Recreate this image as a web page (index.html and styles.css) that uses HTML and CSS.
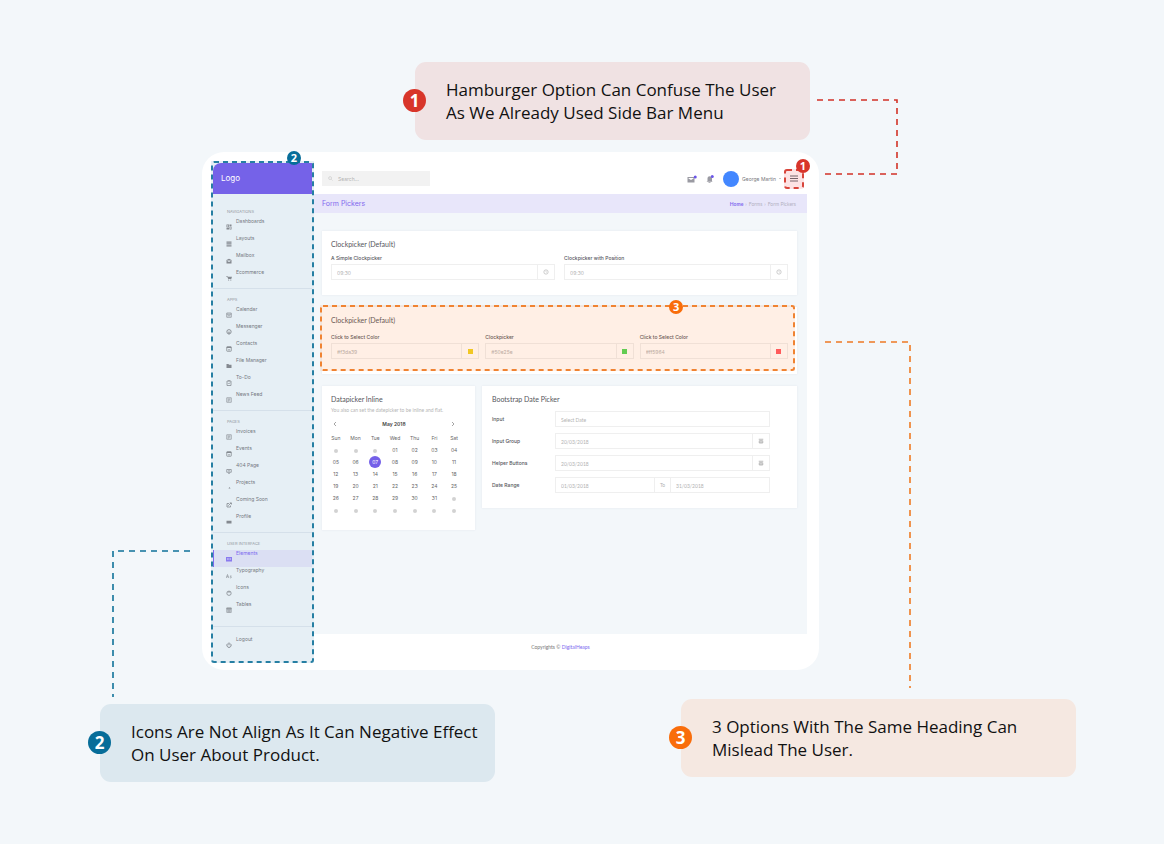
FILE: index.html
```html
<!DOCTYPE html>
<html lang="en">
<head>
<meta charset="utf-8">
<meta name="viewport" content="width=device-width, initial-scale=1">
<title>Form Pickers review</title>
<link rel="stylesheet" href="styles.css">
</head>
<body>
<svg class="sprite" aria-hidden="true">
  <symbol id="i-grid" viewBox="0 0 12 12"><path fill="currentColor" fill-rule="evenodd" d="M1 1h5v6H1zM7 1h4v3H7zM1 8h5v3H1zM7 5h4v6H7zM2.500 2.500v3h2v-3zM8.500 6.500v3h1.500v-3z"/></symbol>
  <symbol id="i-rows" viewBox="0 0 12 12"><path fill="currentColor" d="M1 1h10v2.500H1zM1 4.700h10v2.500H1zM1 8.500h10V11H1z"/></symbol>
  <symbol id="i-mail" viewBox="0 0 12 12"><path fill="currentColor" fill-rule="evenodd" d="M1 4l5-2.500L11 4v7H1zM2.500 5.200v.8L6 8l3.500-2v-.8z"/></symbol>
  <symbol id="i-cart" viewBox="0 0 12 12"><path fill="currentColor" d="M0 2h3l.6 1.500H12L10.500 8H4.500L2.200 3.200H0z"/><circle cx="5.200" cy="10" r="1.200" fill="currentColor"/><circle cx="9.600" cy="10" r="1.200" fill="currentColor"/></symbol>
  <symbol id="i-cal" viewBox="0 0 12 12"><path fill="none" stroke="currentColor" stroke-width="1.400" d="M1.500 2h9v8.500h-9zM1.500 4.500h9M3.500 7.500h5"/></symbol>
  <symbol id="i-chat" viewBox="0 0 12 12"><circle cx="6" cy="5.500" r="4.300" fill="none" stroke="currentColor" stroke-width="1.800"/><path fill="currentColor" d="M3 5.500h6L6 8zM4.500 9h3L6 12z"/></symbol>
  <symbol id="i-contact" viewBox="0 0 12 12"><rect x="1.500" y="1.500" width="9" height="9" rx="1" fill="none" stroke="currentColor" stroke-width="1.600"/><path fill="currentColor" d="M1.500 1.500h9v2.500h-9zM4 7h4v1.500H4z"/></symbol>
  <symbol id="i-folder" viewBox="0 0 12 12"><path fill="currentColor" d="M1 2h4l1 1.500h5V10H1z"/></symbol>
  <symbol id="i-todo" viewBox="0 0 12 12"><path fill="none" stroke="currentColor" stroke-width="1.500" d="M2 2h8v9H2zM4 1.500h4M4 6.500l1.500 1.500L8.200 5"/></symbol>
  <symbol id="i-feed" viewBox="0 0 12 12"><path fill="none" stroke="currentColor" stroke-width="1.300" d="M1.500 1.500h9v9h-9zM3.500 4h5M3.500 6h5M3.500 8h3"/></symbol>
  <symbol id="i-screen" viewBox="0 0 12 12"><path fill="none" stroke="currentColor" stroke-width="1.500" d="M1.500 3h9v5.500h-9zM4 10.500h4M4 5.700h4"/></symbol>
  <symbol id="i-spark" viewBox="0 0 12 12"><path fill="currentColor" d="M7 4l2 3H5z"/></symbol>
  <symbol id="i-send" viewBox="0 0 12 12"><path fill="none" stroke="currentColor" stroke-width="1.600" d="M6 3H2v7h7V7M4.500 7.500L10 2M7.500 1.800H11V5"/></symbol>
  <symbol id="i-card" viewBox="0 0 12 12"><path fill="currentColor" d="M1 3.500h10v5.500H1z"/></symbol>
  <symbol id="i-elements" viewBox="0 0 12 12"><path fill="currentColor" fill-rule="evenodd" d="M0 2h12v9H0zM2 4.500v1h3.500v-1zM2 7v1h3.500V7zM7 4.500v1h3v-1zM7 7v1h3V7z"/></symbol>
  <symbol id="i-type" viewBox="0 0 12 12"><path fill="none" stroke="currentColor" stroke-width="1.200" d="M.5 10L3 3l2.500 7M1.500 7.500h3M11 6c-3-1.500-3 1-1.800 1.300 2.300.5 2 3.400-1.400 2.200"/></symbol>
  <symbol id="i-badge" viewBox="0 0 12 12"><circle cx="6" cy="6.500" r="4.300" fill="none" stroke="currentColor" stroke-width="1.600"/><path stroke="currentColor" stroke-width="1.600" d="M3.500 4h5"/></symbol>
  <symbol id="i-table" viewBox="0 0 12 12"><path fill="none" stroke="currentColor" stroke-width="1.100" d="M1.500 2h9v9h-9zM1.500 5h9M1.500 8h9M4.500 5v6M7.500 5v6"/><path fill="currentColor" d="M1 1.500h10v2H1z"/></symbol>
  <symbol id="i-power" viewBox="0 0 12 12"><path fill="none" stroke="currentColor" stroke-width="1.900" d="M3.800 3a4.200 4.200 0 1 0 4.400 0M6 1v5.500"/></symbol>
  <symbol id="i-clock" viewBox="0 0 12 12"><circle cx="6" cy="6" r="4.300" fill="none" stroke="currentColor" stroke-width="1.400"/><path fill="none" stroke="currentColor" d="M6 3.500V6l1.500 1"/></symbol>
  <symbol id="i-date" viewBox="0 0 12 12"><path fill="none" stroke="currentColor" stroke-width="1.200" d="M1.500 2.500h9M2.500 5.500h7v4.500h-7zM6 5.500V10"/></symbol>
</svg>

<main class="board">
  <section class="top-row">
    <aside class="callout red"><span class="badge">1</span><p>Hamburger Option Can Confuse The User<br>As We Already Used Side Bar Menu</p></aside>
  </section>

  <section class="frame">
    <svg class="connector c1" viewBox="0 0 84 78" aria-hidden="true"><path d="M1 2H81V76H6"/></svg>
    <svg class="connector c2" viewBox="0 0 80 150" aria-hidden="true"><path d="M79 2H2V148"/></svg>
    <svg class="connector c3" viewBox="0 0 88 350" aria-hidden="true"><path d="M1 2H86V348"/></svg>

    <nav class="sidebar">
      <svg class="outline blue" aria-hidden="true"><rect/></svg>
      <span class="badge small blue">2</span>
      <div class="brand">Logo</div>
      <div class="group first">
        <h3>NAVIGATIONS</h3>
        <a href="#"><svg><use href="#i-grid"/></svg>Dashboards</a>
        <a href="#"><svg><use href="#i-rows"/></svg>Layouts</a>
        <a href="#"><svg><use href="#i-mail"/></svg>Mailbox</a>
        <a href="#"><svg><use href="#i-cart"/></svg>Ecommerce</a>
      </div>
      <div class="group">
        <h3>APPS</h3>
        <a href="#"><svg><use href="#i-cal"/></svg>Calendar</a>
        <a href="#"><svg><use href="#i-chat"/></svg>Messenger</a>
        <a href="#"><svg><use href="#i-contact"/></svg>Contacts</a>
        <a href="#"><svg><use href="#i-folder"/></svg>File Manager</a>
        <a href="#"><svg><use href="#i-todo"/></svg>To-Do</a>
        <a href="#"><svg><use href="#i-feed"/></svg>News Feed</a>
      </div>
      <div class="group">
        <h3>PAGES</h3>
        <a href="#"><svg><use href="#i-feed"/></svg>Invoices</a>
        <a href="#"><svg><use href="#i-contact"/></svg>Events</a>
        <a href="#"><svg><use href="#i-screen"/></svg>404 Page</a>
        <a href="#"><svg><use href="#i-spark"/></svg>Projects</a>
        <a href="#"><svg><use href="#i-send"/></svg>Coming Soon</a>
        <a href="#"><svg><use href="#i-card"/></svg>Profile</a>
      </div>
      <div class="group last">
        <h3>USER INTERFACE</h3>
        <a href="#" class="active"><svg><use href="#i-elements"/></svg>Elements</a>
        <a href="#"><svg><use href="#i-type"/></svg>Typography</a>
        <a href="#"><svg><use href="#i-badge"/></svg>Icons</a>
        <a href="#"><svg><use href="#i-table"/></svg>Tables</a>
      </div>
      <div class="group exit">
        <a href="#"><svg><use href="#i-power"/></svg>Logout</a>
      </div>
    </nav>

    <div class="main">
      <header class="topbar">
        <label class="search">
          <svg viewBox="0 0 12 12"><circle cx="5" cy="5" r="3.500"/><path d="M8 8l3 3"/></svg>
          <input type="search" placeholder="Search..." aria-label="Search">
        </label>
        <div class="account">
          <button class="notice" aria-label="Messages"><svg viewBox="0 0 20 16"><path fill="#9a9aa2" fill-rule="evenodd" d="M1 4h14v11H1zM3 6v1l5 3 5-3V6z"/><circle cx="16.500" cy="4" r="3" fill="#6a55e8"/></svg></button>
          <button class="notice" aria-label="Alerts"><svg viewBox="0 0 20 16"><path fill="#9a9aa2" d="M5 12V7c0-3 2-4.500 4-4.500S14 5 14 7v5l1 1.500H3zM7 14h4v1.500H7z"/><circle cx="14.500" cy="3" r="3" fill="#6a55e8"/></svg></button>
          <span class="avatar"></span>
          <button class="user">George Martin<i></i></button>
          <button class="menu" aria-label="Menu">
            <svg class="outline red" aria-hidden="true"><rect/></svg>
            <svg class="bars" viewBox="0 0 8 7"><path d="M0 1h8M0 3.500h8M0 6h8"/></svg>
            <span class="badge small red">1</span>
          </button>
        </div>
      </header>
      <div class="titlebar">
        <h1>Form Pickers</h1>
        <div class="crumbs"><a href="#">Home</a><span>›</span><span>Forms</span><span>›</span><span>Form Pickers</span></div>
      </div>

      <div class="content">
        <section class="card">
          <h2>Clockpicker (Default)</h2>
          <div class="fields two">
            <label>A Simple Clockpicker<span class="group-input"><input value="09:30"><span class="addon pale"><svg><use href="#i-clock"/></svg></span></span></label>
            <label>Clockpicker with Position<span class="group-input"><input value="09:30"><span class="addon pale"><svg><use href="#i-clock"/></svg></span></span></label>
          </div>
        </section>

        <section class="card marked">
          <h2>Clockpicker (Default)</h2>
          <div class="fields three">
            <label>Click to Select Color<span class="group-input"><input value="#f3da39"><span class="addon"><i class="swatch yellow"></i></span></span></label>
            <label>Clockpicker<span class="group-input"><input value="#50e25e"><span class="addon"><i class="swatch green"></i></span></span></label>
            <label>Click to Select Color<span class="group-input"><input value="#ff5964"><span class="addon"><i class="swatch coral"></i></span></span></label>
          </div>
          <div class="highlight">
            <svg class="outline orange" aria-hidden="true"><rect/></svg>
            <span class="badge small orange">3</span>
          </div>
        </section>

        <div class="pair">
          <section class="card calendar">
            <h2>Datapicker Inline</h2>
            <p>You also can set the datepicker to be inline and flat.</p>
            <div class="month">
              <button aria-label="Previous month"><svg viewBox="0 0 6 8"><path d="M4.500 1L1.500 4l3 3"/></svg></button>
              <strong>May 2018</strong>
              <button aria-label="Next month"><svg viewBox="0 0 6 8"><path d="M1.500 1l3 3-3 3"/></svg></button>
            </div>
            <table>
              <thead><tr><th>Sun</th><th>Mon</th><th>Tue</th><th>Wed</th><th>Thu</th><th>Fri</th><th>Sat</th></tr></thead>
              <tbody>
                <tr><td><i></i></td><td><i></i></td><td><i></i></td><td>01</td><td>02</td><td>03</td><td>04</td></tr>
                <tr><td>05</td><td>06</td><td><b>07</b></td><td>08</td><td>09</td><td>10</td><td>11</td></tr>
                <tr><td>12</td><td>13</td><td>14</td><td>15</td><td>16</td><td>17</td><td>18</td></tr>
                <tr><td>19</td><td>20</td><td>21</td><td>22</td><td>23</td><td>24</td><td>25</td></tr>
                <tr><td>26</td><td>27</td><td>28</td><td>29</td><td>30</td><td>31</td><td><i></i></td></tr>
                <tr><td><i></i></td><td><i></i></td><td><i></i></td><td><i></i></td><td><i></i></td><td><i></i></td><td><i></i></td></tr>
              </tbody>
            </table>
          </section>

          <section class="card dates">
            <h2>Bootstrap Date Picker</h2>
            <div class="line"><label for="d1">Input</label><span class="group-input"><input id="d1" placeholder="Select Date"></span></div>
            <div class="line"><label for="d2">Input Group</label><span class="group-input"><input id="d2" value="20/03/2018"><span class="addon"><svg><use href="#i-date"/></svg></span></span></div>
            <div class="line"><label for="d3">Helper Buttons</label><span class="group-input"><input id="d3" value="20/03/2018"><span class="addon"><svg><use href="#i-date"/></svg></span></span></div>
            <div class="line"><label for="d4">Date Range</label><span class="group-input"><input id="d4" value="01/03/2018"><span class="addon to">To</span><input aria-label="Range end" value="31/03/2018"></span></div>
          </section>
        </div>
      </div>

      <footer>Copyrights © <a href="#">DigitalHeaps</a></footer>
    </div>
  </section>

  <section class="bottom-row">
    <aside class="callout blue"><span class="badge">2</span><p>Icons Are Not Align As It Can Negative Effect<br>On User About Product.</p></aside>
    <aside class="callout orange"><span class="badge">3</span><p>3 Options With The Same Heading Can<br>Mislead The User.</p></aside>
  </section>
</main>
</body>
</html>
```

FILE: styles.css
```css
* { box-sizing: border-box; }
body {
  margin: 0;
  min-height: 100vh;
  background: #f3f7fa;
  color: #55555c;
  font: 5px/6px Inter, "Liberation Sans", sans-serif;
}
h1, h2, h3, p { margin: 0; font-weight: 400; }
a { color: inherit; text-decoration: none; }
button { border: 0; padding: 0; background: none; font: inherit; color: inherit; }
input { border: 0; padding: 0; background: none; font: inherit; color: inherit; min-width: 0; outline: 0; }
.sprite { display: none; }

.board { padding-top: 62px; }
.top-row { display: flex; justify-content: flex-end; padding-right: 354px; }
.bottom-row {
  display: flex;
  justify-content: space-between;
  align-items: flex-start;
  padding: 29px 88px 40px 100px;
}

/* Callouts */
.callout {
  position: relative;
  width: 395px;
  padding: 16px 0 16px 31px;
  border-radius: 11px;
  color: #111;
  font: 17px/23px "Open Sans", sans-serif;
}
.callout p { white-space: nowrap; }
.callout.red { background: #f0e2e3; }
.callout.blue { background: #dce8ef; margin-top: 5px; }
.callout.orange { background: #f5e8e1; }
.badge {
  position: absolute;
  left: -12px;
  top: 27px;
  width: 23px;
  height: 23px;
  border-radius: 50%;
  color: #fff;
  font: 700 17px/23px "Open Sans", sans-serif;
  text-align: center;
}
.badge.small { width: 14px; height: 14px; font-size: 11px; line-height: 14px; }
.red > .badge, .badge.red { background: #d8352a; }
.blue > .badge, .badge.blue { background: #076d99; }
.orange > .badge, .badge.orange { background: #f96d0b; }

.outline { position: absolute; inset: 0; width: 100%; height: 100%; pointer-events: none; }
.outline rect {
  x: 1px; y: 1px; rx: 2px;
  width: calc(100% - 2px);
  height: calc(100% - 2px);
  fill: none;
  stroke-width: 2;
  stroke-dasharray: 5 4;
}
.outline.blue rect { stroke: #267fa3; }
.outline.red rect { stroke: #d8453b; }
.outline.orange rect { stroke: #f08332; }

.connector { position: absolute; fill: none; stroke-width: 1.6; stroke-dasharray: 6 5; }
.c1 { left: calc(100% - 3px); top: -54px; width: 84px; height: 78px; stroke: #d23227; }
.c2 { left: -91px; top: 397px; width: 80px; height: 150px; stroke: #0f7299; }
.c3 { left: calc(100% + 5px); top: 188px; width: 88px; height: 350px; stroke: #ee7a24; }

/* Application window */
.frame {
  position: relative;
  display: flex;
  margin: 12px 345px 0 202px;
  padding: 9px 12px 7px 9px;
  border-radius: 22px;
  background: #fff;
}

.sidebar { position: relative; flex: none; width: 103px; padding: 2px; background: #e6eff5; color: #74787f; }
.sidebar > .badge { left: 76px; top: -10px; }
.brand {
  padding: 0 8px;
  background: #7562e8;
  border-top-left-radius: 8px;
  color: #fff;
  font-size: 8px;
  line-height: 31px;
}
.group { padding-bottom: 2px; border-top: 1px solid #d5e0ea; }
.group.first { padding-top: 7px; border-top: 0; }
.group.last { padding-bottom: 8px; }
.group.exit { padding: 9px 0 8px; }
.group h3 { padding: 8px 0 3px 14px; font-size: 4px; line-height: 6px; color: #92979e; }
.group a { display: flex; gap: 4px; height: 17px; padding-left: 13px; }
.group a svg { width: 6px; height: 6px; margin-top: 6px; opacity: .85; }
.group a.active { background: #dbdff3; color: #7d69ef; box-shadow: inset 1px 0 #7d69ef; }

.main { flex: 1; min-width: 0; display: flex; flex-direction: column; }
.topbar { display: flex; justify-content: space-between; align-items: center; height: 33px; padding: 2px 3px 0 8px; }
.search { display: flex; align-items: center; gap: 5px; width: 108px; height: 15px; padding: 0 6px; background: #f2f2f2; color: #aaa; }
.search svg { width: 5px; height: 5px; fill: none; stroke: #b5b5b5; }
.search input { flex: 1; }
::placeholder { color: #b3b3b3; opacity: 1; }
.account { display: flex; align-items: center; }
.notice { width: 10px; height: 8px; margin-right: 8px; }
.notice svg { display: block; width: 10px; height: 8px; }
.avatar { width: 16px; height: 16px; margin-right: 3px; border-radius: 50%; background: #4387ff; }
.user { display: flex; align-items: center; gap: 3px; margin-right: 3px; color: #77777d; }
.user i { border: 1px solid transparent; border-top-color: #999; }
.menu { position: relative; display: grid; place-items: center; width: 20px; height: 20px; background: #fde3e4; border-radius: 3px; }
.bars { width: 8px; height: 7px; stroke: #77656b; }
.menu .badge { left: 12px; top: -10px; }

.titlebar { display: flex; justify-content: space-between; align-items: center; height: 19px; padding: 0 11px 0 8px; background: #e8e6fa; }
.titlebar h1 { font-size: 7px; line-height: 8px; color: #8168ee; }
.crumbs { display: flex; gap: 2px; font-family: Lato, sans-serif; font-size: 5px; color: #b3b1c2; }
.crumbs a { color: #8168ee; font-weight: 700; }

.content { flex: 1; display: flex; flex-direction: column; gap: 12px; padding: 18px 10px 0 8px; background: #f3f7fa; }
.card { position: relative; padding: 9px; background: #fff; box-shadow: 0 0 2px #e3e8ee; }
.card h2 { font-family: Lato, sans-serif; font-size: 7px; line-height: 8px; }
.fields { display: grid; margin-top: 7px; }
.fields.two { grid-template-columns: 1fr 1fr; gap: 9px; padding-bottom: 6px; }
.marked { padding-top: 9px; }
.fields.three { grid-template-columns: 1fr 1fr 1fr; gap: 6px; margin-top: 10px; padding-bottom: 6px; }
.fields label { font-weight: 500; }
.group-input { display: flex; height: 16px; margin-top: 3px; border: 1px solid #efefef; color: #b2b2b2; font-weight: 400; }
.group-input input { flex: 1; width: 0; padding: 2px 5px 0; }
.addon { display: grid; place-items: center; width: 17px; border-left: 1px solid #efefef; }
.addon svg { width: 6px; height: 6px; color: #8d8d8d; }
.addon.pale svg { color: #b9b9b9; }
.addon.to { border-right: 1px solid #efefef; }
.swatch { width: 5px; height: 5px; }
.yellow { background: #f0d327; }
.green { background: #50d85a; }
.coral { background: #ff5964; }
.highlight { position: absolute; inset: -2px 2px 3px -2px; background: rgba(255, 112, 16, .11); pointer-events: none; }
.highlight .badge { left: calc(75% - 7px); top: -5px; }

.pair { display: grid; grid-template-columns: 153fr 315fr; gap: 7px; align-items: start; }
.calendar { padding-bottom: 14px; }
.calendar p { margin-top: 4px; font-family: Lato, sans-serif; font-size: 5px; line-height: 6px; color: #b5b5b5; white-space: nowrap; }
.month { display: flex; justify-content: space-between; align-items: center; height: 10px; margin: 6px 11px 3px 2px; }
.month strong { font-weight: 600; color: #444; }
.month svg { display: block; width: 4px; height: 6px; fill: none; stroke: #777; }
.calendar table { width: 138px; margin-left: -5px; border-collapse: collapse; table-layout: fixed; color: #666; }
.calendar th { font-weight: 400; }
.calendar th, .calendar td { height: 12px; padding: 0; text-align: center; }
.calendar td i { display: inline-block; width: 4px; height: 4px; border-radius: 50%; background: #d2d2d2; vertical-align: middle; }
.calendar td b { display: block; width: 12px; height: 12px; margin: 0 auto; border-radius: 50%; background: #7460e8; color: #fff; font-weight: 400; line-height: 12px; }

.dates { padding: 9px 27px 15px 10px; }
.dates h2 { margin-bottom: 8px; }
.line { display: grid; grid-template-columns: 63px 1fr; align-items: center; margin-bottom: 6px; }
.line:last-child { margin-bottom: 0; }
.line label { font-weight: 500; }
.line .group-input { margin-top: 0; font-family: Lato, sans-serif; }

footer { height: 29px; padding-top: 10px; font-family: Lato, sans-serif; text-align: center; color: #777; }
footer a { color: #7d69ef; }
```
